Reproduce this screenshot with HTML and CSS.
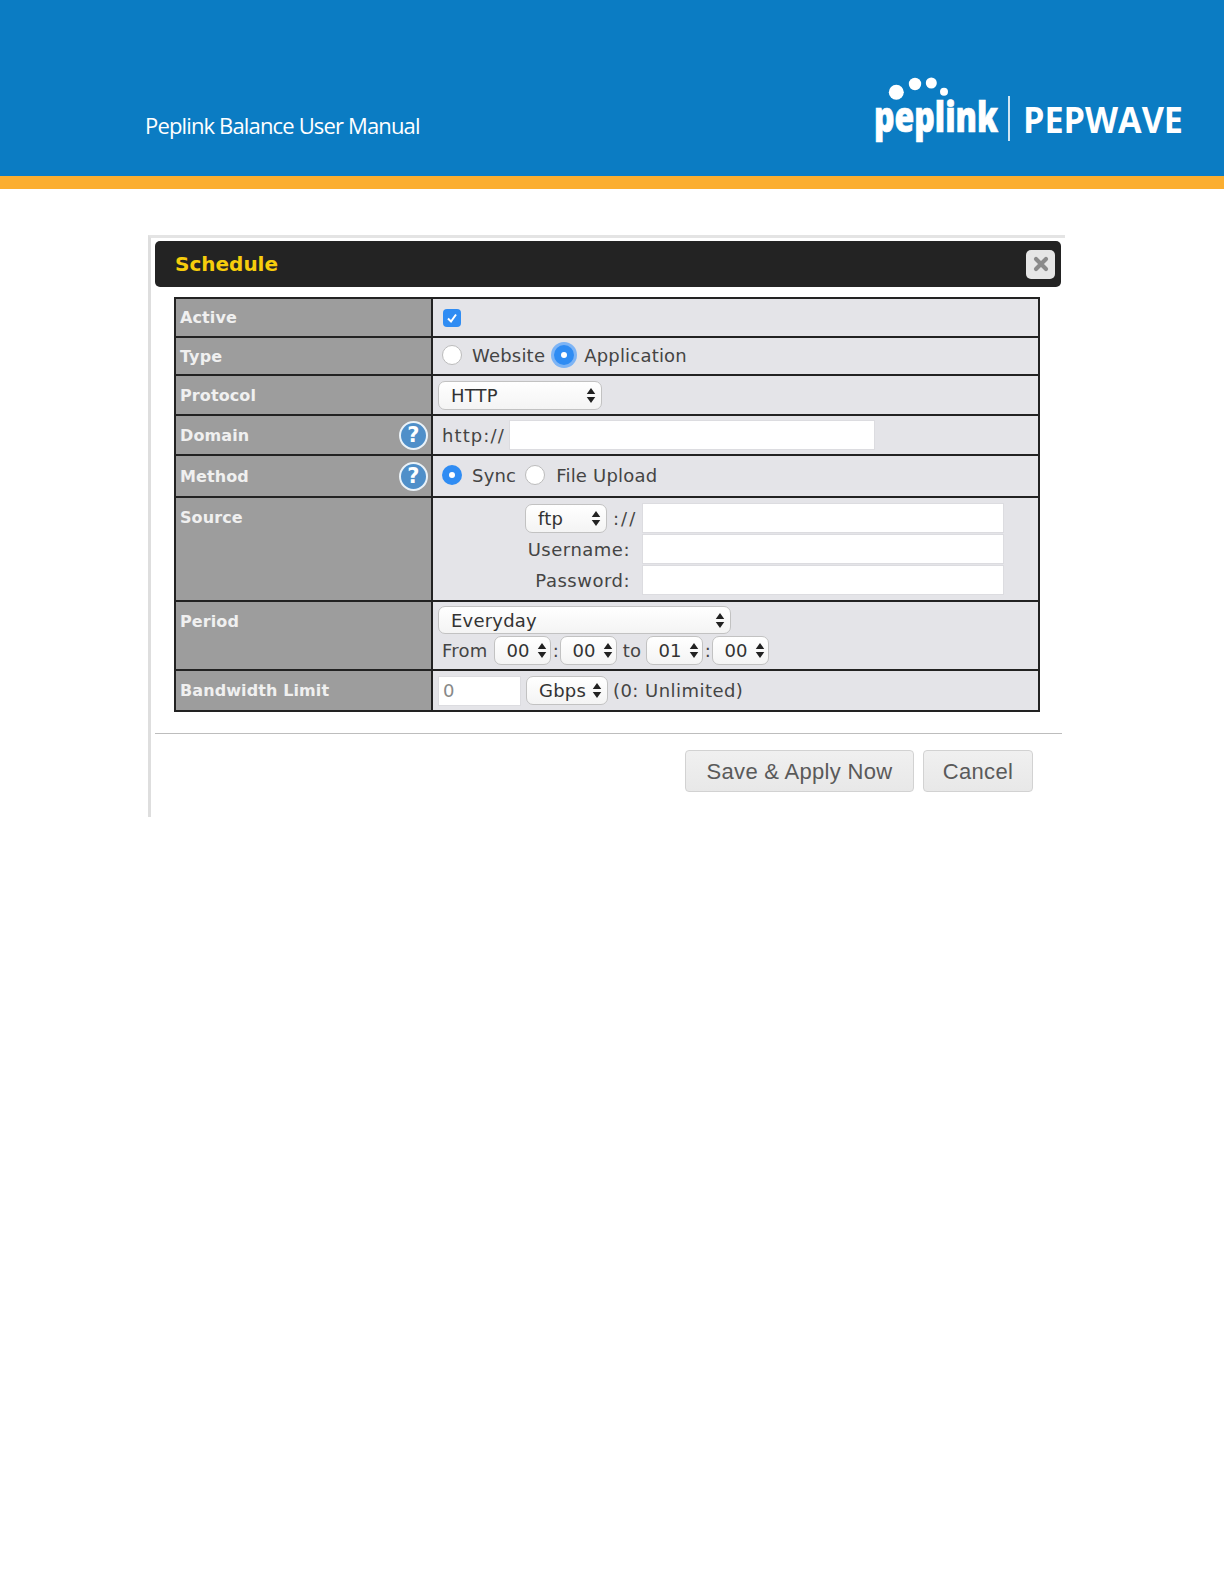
FILE: index.html
```html
<!DOCTYPE html>
<html lang="en">
<head>
<meta charset="utf-8">
<title>Peplink Balance User Manual</title>
<link rel="stylesheet" href="styles.css">
</head>
<body>
<header class="banner">
  <div class="banner-title">Peplink Balance User Manual</div>
  <svg class="logo" width="320" height="70" viewBox="0 0 320 70" aria-label="Peplink Pepwave">
    <circle cx="29.3" cy="22.3" r="7.5" fill="#fff"/>
    <circle cx="48" cy="14" r="6.2" fill="#fff"/>
    <circle cx="64.3" cy="13" r="5.5" fill="#fff"/>
    <circle cx="77" cy="21.7" r="4" fill="#fff"/>
    <text x="7" y="61.500" class="logo-peplink" textLength="124" lengthAdjust="spacingAndGlyphs">peplink</text>
    <rect x="141.2" y="26" width="1.6" height="45" fill="#fff"/>
    <text x="156" y="63" class="logo-pepwave" textLength="160" lengthAdjust="spacingAndGlyphs">PEPWAVE</text>
  </svg>
</header>
<div class="stripe"></div>

<main class="dialog">
  <div class="dialog-head">
    <h1 class="dialog-title">Schedule</h1>
    <button class="close" aria-label="Close">
      <svg width="16" height="16" viewBox="0 0 16 16"><path d="M3 3 L13 13 M13 3 L3 13" stroke="#8a8a8a" stroke-width="4.2" stroke-linecap="round"/></svg>
    </button>
  </div>

  <table class="form">
    <colgroup><col class="col-label"><col></colgroup>
    <tr class="r39">
      <th>Active</th>
      <td><div class="line check-line"><span class="checkbox"><svg width="18" height="18" viewBox="0 0 18 18"><path d="M5 9.500 L8 12.500 L13 5.500" fill="none" stroke="#fff" stroke-width="2"/></svg></span></div></td>
    </tr>
    <tr class="r38">
      <th>Type</th>
      <td><div class="line radios"><span class="radio"></span><span class="rl w-web">Website</span><span class="radio on focus"></span><span class="rl">Application</span></div></td>
    </tr>
    <tr class="r40">
      <th>Protocol</th>
      <td><div class="line"><span class="sel w-proto">HTTP<svg class="arrows" width="10" height="17" viewBox="0 0 9 16"><path d="M4.500 1 L8.500 6.500 H.5 Z M.5 9.500 H8.500 L4.500 15 Z"/></svg></span></div></td>
    </tr>
    <tr class="r40">
      <th><span class="th-row">Domain<span class="help">?</span></span></th>
      <td><div class="line domain"><span class="slashy">http://</span><span class="input w-domain"></span></div></td>
    </tr>
    <tr class="r42">
      <th><span class="th-row">Method<span class="help">?</span></span></th>
      <td><div class="line radios"><span class="radio on"></span><span class="rl w-sync">Sync</span><span class="radio"></span><span class="rl w-file">File Upload</span></div></td>
    </tr>
    <tr class="r104">
      <th class="top">Source</th>
      <td>
        <div class="source">
          <div class="proto"><span class="sel w-ftp">ftp<svg class="arrows" width="10" height="17" viewBox="0 0 9 16"><path d="M4.500 1 L8.500 6.500 H.5 Z M.5 9.500 H8.500 L4.500 15 Z"/></svg></span><span class="slashy-wide">://</span></div><span class="input w-src"></span>
          <label class="src-label">Username:</label><span class="input w-src"></span>
          <label class="src-label">Password:</label><span class="input w-src"></span>
        </div>
      </td>
    </tr>
    <tr class="r69">
      <th class="top">Period</th>
      <td>
        <div class="period">
          <span class="sel w-period">Everyday<svg class="arrows" width="10" height="17" viewBox="0 0 9 16"><path d="M4.500 1 L8.500 6.500 H.5 Z M.5 9.500 H8.500 L4.500 15 Z"/></svg></span>
          <div class="times">
            <span class="from">From</span>
            <span class="sel time">00<svg class="arrows" width="10" height="17" viewBox="0 0 9 16"><path d="M4.500 1 L8.500 6.500 H.5 Z M.5 9.500 H8.500 L4.500 15 Z"/></svg></span>
            <span class="sep">:</span>
            <span class="sel time">00<svg class="arrows" width="10" height="17" viewBox="0 0 9 16"><path d="M4.500 1 L8.500 6.500 H.5 Z M.5 9.500 H8.500 L4.500 15 Z"/></svg></span>
            <span class="to">to</span>
            <span class="sel time">01<svg class="arrows" width="10" height="17" viewBox="0 0 9 16"><path d="M4.500 1 L8.500 6.500 H.5 Z M.5 9.500 H8.500 L4.500 15 Z"/></svg></span>
            <span class="sep">:</span>
            <span class="sel time">00<svg class="arrows" width="10" height="17" viewBox="0 0 9 16"><path d="M4.500 1 L8.500 6.500 H.5 Z M.5 9.500 H8.500 L4.500 15 Z"/></svg></span>
          </div>
        </div>
      </td>
    </tr>
    <tr class="r41">
      <th>Bandwidth Limit</th>
      <td><div class="line bw"><span class="input w-bw">0</span><span class="sel w-gbps">Gbps<svg class="arrows" width="10" height="17" viewBox="0 0 9 16"><path d="M4.500 1 L8.500 6.500 H.5 Z M.5 9.500 H8.500 L4.500 15 Z"/></svg></span><span class="bw-note">(0: Unlimited)</span></div></td>
    </tr>
  </table>

  <hr class="rule">

  <div class="actions">
    <button class="btn w-save">Save &amp; Apply Now</button>
    <button class="btn w-cancel">Cancel</button>
  </div>
</main>
</body>
</html>
```

FILE: styles.css
```css
* { box-sizing: border-box; }
html, body { margin: 0; padding: 0; background: #fff; }
body { height: 1584px; overflow: hidden; font-family: "DejaVu Sans", Verdana, sans-serif; }

.banner {
  height: 176px;
  background: #0b7cc3;
  display: flex;
  justify-content: space-between;
  align-items: flex-end;
  padding: 0 37px 33px 145px;
}
.banner-title {
  font-family: "Open Sans", sans-serif;
  font-size: 22px;
  line-height: 30px;
  letter-spacing: -0.85px;
  color: #fff;
  margin-bottom: 3px;
}
.logo { display: block; margin-bottom: 3px; overflow: visible; }
.logo-peplink { font-family: "Open Sans", sans-serif; font-weight: 800; font-size: 42px; fill: #fff; stroke: #fff; stroke-width: 0.7px; }
.logo-pepwave { font-family: "Open Sans", sans-serif; font-weight: 700; font-size: 35px; fill: #fff; }
.stripe { height: 13px; background: #fbae30; }

.dialog {
  margin: 46px 0 0 148px;
  width: 917px;
  height: 582px;
  border-top: 3px solid #e4e4e4;
  border-left: 3px solid #dedede;
  padding: 3px 0 0 4px;
}
.dialog-head {
  width: 906px;
  height: 46px;
  background: #232323;
  border-radius: 5px;
  display: flex;
  align-items: center;
  justify-content: space-between;
  padding: 0 6px 0 20px;
}
.dialog-title {
  margin: 0;
  font-size: 20px;
  font-weight: 700;
  color: #f6cd0c;
}
.close {
  width: 29px;
  height: 29px;
  border: 0;
  border-radius: 5px;
  background: #e6e6e6;
  display: flex;
  align-items: center;
  justify-content: center;
  padding: 0;
}

.form {
  margin: 10px 0 0 19px;
  width: 866px;
  table-layout: fixed;
  border-collapse: collapse;
  border: 2px solid #222;
  font-size: 18px;
  letter-spacing: 0.2px;
  color: #444;
}
.col-label { width: 257px; }
.form th, .form td { border: 2px solid #222; padding: 0; }
.form th {
  background: #9d9d9d;
  color: #f0f0f0;
  font-size: 16px;
  font-weight: 700;
  letter-spacing: 0.1px;
  text-align: left;
  padding: 0 3px 0 4px;
}
.form th.top { vertical-align: top; padding-top: 10px; }
.form td { background: #e4e4e8; padding-left: 5px; }
.r38 { height: 38px; }
.r39 { height: 39px; }
.r40 { height: 40px; }
.r41 { height: 41px; }
.r42 { height: 42px; }
.r104 { height: 104px; }
.r69 { height: 69px; }

.th-row { display: flex; align-items: center; justify-content: space-between; }
.help {
  width: 29px;
  height: 29px;
  border-radius: 50%;
  background: #4f8fc9;
  border: 2px solid #eaf2f8;
  color: #fff;
  font-size: 21px;
  font-weight: 700;
  display: flex;
  align-items: center;
  justify-content: center;
}

.line { display: flex; align-items: center; }
.check-line { padding-left: 5px; }
.checkbox {
  width: 18px;
  height: 18px;
  border-radius: 4px;
  background: #2f8cf3;
  display: block;
}
.checkbox svg { display: block; }
.radios { padding-left: 4px; margin-bottom: 2px; }
.radio {
  width: 20px;
  height: 20px;
  border-radius: 50%;
  background: #fff;
  border: 1px solid #bcbcbc;
  flex: none;
}
.radio.on {
  background: #2f8cf3;
  border: 0;
  position: relative;
}
.radio.on::after {
  content: "";
  position: absolute;
  left: 7px;
  top: 7px;
  width: 6px;
  height: 6px;
  border-radius: 50%;
  background: #fff;
}
.radio.focus { box-shadow: 0 0 0 3px #7db4f5; }
.rl { margin-left: 10px; }
.w-web { margin-right: 9px; }
.w-sync { margin-right: 9px; }
.w-file { margin-left: 11px; }

.sel {
  display: inline-flex;
  align-items: center;
  justify-content: space-between;
  height: 29px;
  background: linear-gradient(#ffffff, #f4f4f4);
  border: 1px solid #c2c2c2;
  border-radius: 7px;
  padding: 0 5px 0 12px;
  color: #333;
  flex: none;
}
.arrows { fill: #222; flex: none; }
.w-proto { width: 164px; }
.w-ftp { width: 82px; }
.w-period { width: 293px; height: 28px; }
.w-gbps { width: 82px; }
.time { width: 57px; padding: 0 3px 0 11px; }

.input {
  display: block;
  height: 30px;
  background: #fff;
  border: 1px solid #dcdce0;
  flex: none;
}
.domain { gap: 4px; padding-left: 4px; }
.slashy { letter-spacing: 1.1px; }
.slashy-wide { letter-spacing: 2px; }
.w-domain { width: 366px; }
.w-src { width: 362px; }
.w-bw { width: 83px; color: #888; padding-left: 4px; line-height: 28px; }

.source {
  display: grid;
  grid-template-columns: 112px 362px;
  column-gap: 5px;
  row-gap: 1px;
  align-items: center;
  margin-left: 87px;
}
.proto { display: flex; align-items: center; gap: 6px; }
.src-label { text-align: right; padding-right: 7px; letter-spacing: 0.5px; }

.period { display: flex; flex-direction: column; gap: 2px; align-items: flex-start; }
.times { display: flex; align-items: center; }
.from { margin: 0 7px 0 4px; }
.sep { width: 9px; text-align: center; flex: none; }
.to { width: 29px; text-align: center; flex: none; }

.bw { gap: 5px; }
.bw-note { letter-spacing: 0.45px; }

.rule {
  margin: 21px 0 0 0;
  width: 907px;
  height: 1px;
  border: 0;
  background: #bdbdbd;
}
.actions {
  display: flex;
  justify-content: flex-end;
  gap: 9px;
  width: 906px;
  padding: 16px 28px 0 0;
}
.btn {
  height: 42px;
  background: linear-gradient(#f0f0f0, #e8e8e8);
  border: 1px solid #d2d2d2;
  border-radius: 4px;
  font-family: "Liberation Sans", Arial, sans-serif;
  font-size: 22px;
  letter-spacing: 0.3px;
  color: #5a5a5a;
  padding: 2px 0 0;
}
.w-save { width: 229px; }
.w-cancel { width: 110px; }
```
